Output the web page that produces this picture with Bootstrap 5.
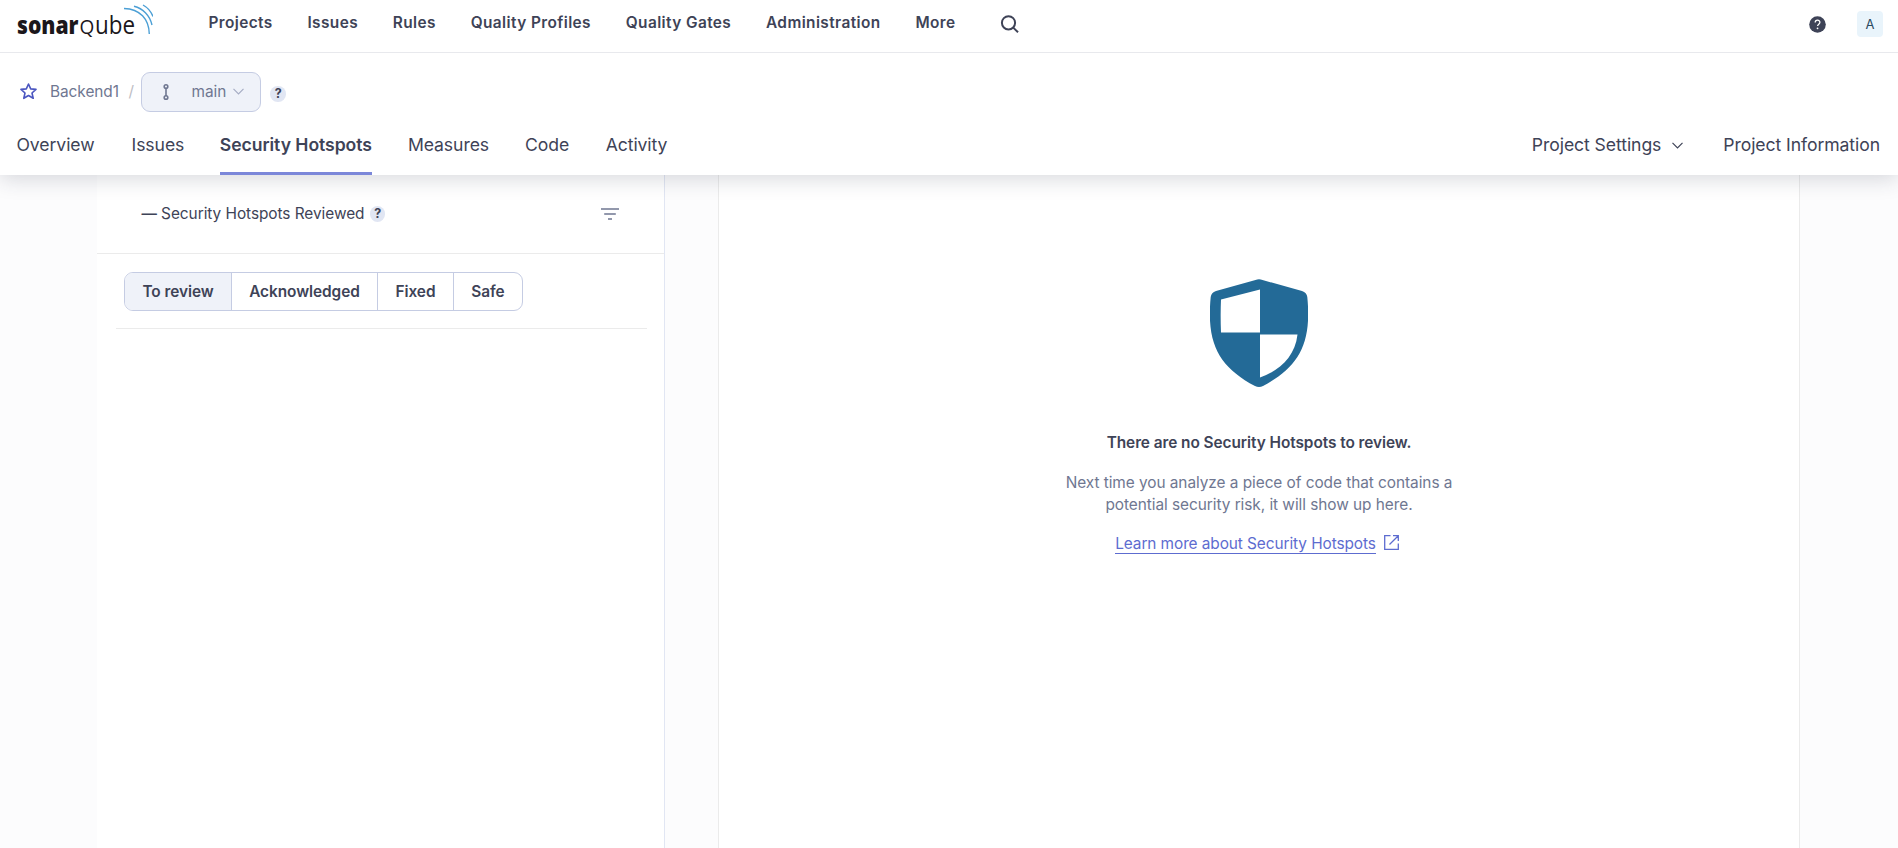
<!DOCTYPE html>
<html lang="en">
<head>
<meta charset="utf-8">
<title>Security Hotspots - Backend1</title>
<link href="https://cdn.jsdelivr.net/npm/bootstrap@5.3.0/dist/css/bootstrap.min.css" rel="stylesheet">
<style>
body{font-family:Inter,"Liberation Sans",sans-serif;font-size:15.4px;letter-spacing:-.05px;line-height:22px;color:#3e4357;background:#fcfcfd;height:100vh;overflow:hidden}
a{color:inherit;text-decoration:none}
svg{display:block;flex:none}
.topbar{position:relative;z-index:3;height:53px;border-bottom:1px solid #e8e9ed;background:#fff;padding:0 15px 0 17px}
.topmenu{gap:34.8px;margin-left:55.4px;font-weight:600;padding-bottom:7px;letter-spacing:.41px}
.topmenu a{white-space:nowrap}
.avatar-box{width:26px;height:26px;border-radius:4px;background:#e9f4fb;color:#2a4a5f;font-size:13px;line-height:26px}
.project-head{position:relative;z-index:2;background:#fff;height:122px;box-shadow:0 4px 20px rgba(40,45,65,.18)}
.crumbs{height:77px;padding-left:20px;color:#6f7791}
.branch{width:120px;height:40px;border:1px solid #c5cce3;border-radius:9px;background:#eff2f9;padding:0 16.5px 0 20px}
.tip{width:15.4px;height:15.4px;border-radius:50%;background:#e1e6f3;color:#3e4357;font-size:12.5px;font-weight:700;line-height:15.4px;text-align:center;flex:none}
.tabs-row{height:45px;padding:0 18px 0 16.5px;font-size:17.6px;letter-spacing:-.08px}
.tabs-row a{height:45px;padding-top:4px;white-space:nowrap}
.tabs-row .current{font-weight:600;letter-spacing:-.05px;border-bottom:3px solid #7b87d9}
.side{width:568px;margin-left:97px;background:#fff;border-right:1px solid #e1e6f3}
.side-top{height:79px;border-bottom:1px solid #ebebeb;padding:0 45px 0 44.5px}
.toggle{margin:18px 0 0 27px;border:1px solid #c5cce3;border-radius:9px;width:399px;height:39px;overflow:hidden;font-weight:600;line-height:37px}
.toggle>*+*{border-left:1px solid #c5cce3}
.rule{margin:17px 17px 0 19px;height:1px;background:#ebebeb}
.main-pane{width:1082px;margin-left:53px;background:#fff;border:solid #ebebeb;border-width:0 1px}
.learn{color:#5d6cd0;border-bottom:1px solid #5d6cd0;line-height:19px;letter-spacing:-.08px}
</style>
</head>
<body class="d-flex flex-column">
<header class="topbar d-flex align-items-center flex-shrink-0">
  <svg width="136" height="52" viewBox="17 0 136 52">
    <g font-family="'Open Sans','Noto Sans',sans-serif" fill="#1b171b" letter-spacing="0">
      <text x="17" y="33.600" font-size="25" font-weight="800" textLength="61.500" lengthAdjust="spacingAndGlyphs">sonar</text>
      <text x="79.500" y="33.600" font-size="19.500" font-weight="500" textLength="14.800" lengthAdjust="spacingAndGlyphs">Q</text>
      <text x="95" y="33.600" font-size="25" textLength="40" lengthAdjust="spacingAndGlyphs">ube</text>
    </g>
    <g fill="none" stroke="#4b9fd5" stroke-width="1.4">
      <path d="M124 8.500C140 9 149 19 149.300 34"/>
      <path d="M134 6.200C143 8.500 150 15.500 152 25"/>
      <path d="M143 5C147.500 7.500 151 11.500 153 16.500"/>
    </g>
  </svg>
  <nav class="topmenu d-flex">
    <a href="#">Projects</a><a href="#">Issues</a><a href="#">Rules</a><a href="#">Quality Profiles</a><a href="#">Quality Gates</a><a href="#">Administration</a><a href="#">More</a>
  </nav>
  <svg style="margin:-5px 0 0 45px" width="20" height="20" viewBox="0 0 20 20" fill="none" stroke="#3e4357" stroke-width="2"><circle cx="8.500" cy="8.800" r="6.600"/><path d="M13.300 13.600l4.700 4.700"/></svg>
  <svg class="ms-auto" style="margin-top:-4px" width="17" height="17" viewBox="0 0 17 17"><circle cx="8.500" cy="8.500" r="8.300" fill="#3e4357"/><path d="M6.200 6.500c0-3 4.700-3 4.700-.2 0 1.800-2.300 1.900-2.300 3.700" fill="none" stroke="#fff" stroke-width="1.300"/><circle cx="8.550" cy="12.300" r=".9" fill="#fff"/></svg>
  <div class="avatar-box text-center" style="margin:-4px 0 0 31px">A</div>
</header>

<section class="project-head flex-shrink-0">
  <div class="crumbs d-flex align-items-center">
    <svg width="17" height="17" viewBox="0 0 17 17" fill="none" stroke="#4b56c0" stroke-width="1.600" stroke-linejoin="round"><path d="M8.500 1l2.200 4.900 5.300.5-4 3.600 1.200 5.300-4.700-2.800-4.700 2.800L5 10 1 6.400l5.300-.5z"/></svg>
    <a href="#" style="margin-left:13px">Backend1</a>
    <span style="margin-left:9.500px;color:#bdbdc4">/</span>
    <div class="branch d-flex align-items-center" style="margin-left:7.500px">
      <svg width="8" height="18" viewBox="0 0 8 18" fill="none" stroke="#6f7791" stroke-width="1.600"><circle cx="4" cy="3.500" r="1.800"/><circle cx="4" cy="14.500" r="1.800"/><path d="M4 5v8"/></svg>
      <span style="margin-left:21px">main</span>
      <svg class="ms-auto" width="11" height="7" viewBox="0 0 11 7" fill="none" stroke="#a6adc4" stroke-width="1.200"><path d="M.5.8l5 5 5-5"/></svg>
    </div>
    <span class="tip" style="margin:5px 0 0 9px">?</span>
  </div>
  <nav class="tabs-row d-flex">
    <a href="#">Overview</a>
    <a href="#" style="margin-left:37px">Issues</a>
    <a href="#" class="current" style="margin-left:35.500px">Security Hotspots</a>
    <a href="#" style="margin-left:36px">Measures</a>
    <a href="#" style="margin-left:36px">Code</a>
    <a href="#" style="margin-left:36.500px">Activity</a>
    <a href="#" class="ms-auto d-flex">Project Settings<svg style="margin:8px 0 0 10.500px" width="11" height="7" viewBox="0 0 11 7" fill="none" stroke="#3e4357" stroke-width="1.200"><path d="M.5.8l5 5 5-5"/></svg></a>
    <a href="#" style="margin-left:40.500px">Project Information</a>
  </nav>
</section>

<div class="d-flex flex-grow-1">
  <aside class="side flex-shrink-0">
    <div class="side-top d-flex align-items-center">
      <span><b style="font-weight:600">—</b> Security Hotspots Reviewed</span>
      <span class="tip" style="margin-left:5.500px">?</span>
      <svg class="ms-auto" width="18" height="12" viewBox="0 0 18 12" fill="none" stroke="#6f7791" stroke-width="1.600"><path d="M0 1h18M3.200 6h11.600M7 11h4"/></svg>
    </div>
    <div class="toggle d-flex text-center">
      <div style="width:106px;background:#eff2f9">To review</div>
      <div style="width:146px">Acknowledged</div>
      <div style="width:76px">Fixed</div>
      <div class="flex-fill">Safe</div>
    </div>
    <div class="rule"></div>
  </aside>
  <main class="main-pane flex-shrink-0 d-flex flex-column align-items-center text-center">
    <svg style="margin-top:104px" width="98" height="108" viewBox="0 0 98 108"><path fill="#236a97" d="M45.500 1Q49 -.5 52.500 1L92 12Q96.700 13.500 97.300 18C102 66 88 88 53 107Q49 109 45 107C10 88-4 66 .7 18Q1.300 13.500 6 12Z"/><path fill="#fff" d="M11 20.500L50 10.500V53.500H11Q10.300 36 11 20.500ZM50 55.500H87.500C85 78 69 92 50 98.500Z"/></svg>
    <div class="fw-semibold" style="margin-top:45px;letter-spacing:-.06px">There are no Security Hotspots to review.</div>
    <div style="margin-top:18px;color:#6f7791">Next time you analyze a piece of code that contains a<br>potential security risk, it will show up here.</div>
    <div class="d-flex" style="margin:18px 4px 0 0"><a href="#" class="learn">Learn more about Security Hotspots</a>
      <svg style="margin:1px 0 0 8px" width="15" height="15" viewBox="0 0 15 15" fill="none" stroke="#5d6cd0" stroke-width="1.300"><path d="M6.500.7H.7V14.300H14.300V8.500M9 .7h5.300V6M14.300.7L5.500 9.500"/></svg>
    </div>
  </main>
</div>
<script src="https://cdn.jsdelivr.net/npm/bootstrap@5.3.0/dist/js/bootstrap.bundle.min.js"></script>
</body>
</html>
